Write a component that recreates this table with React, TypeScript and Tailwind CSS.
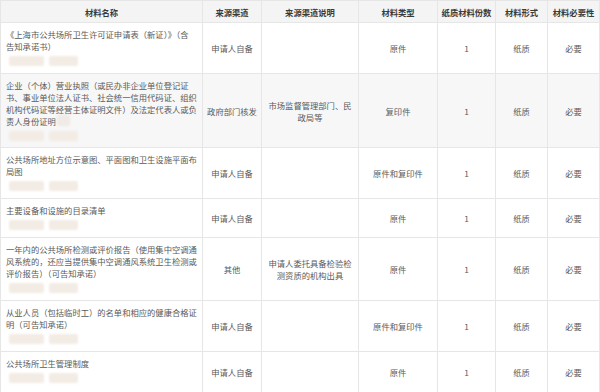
import * as React from "react";

type Row = {
  name: string[];
  tail?: boolean;
  source: string;
  note: string[];
  kind: string;
  shade?: boolean;
  h: string;
};

const ROWS: Row[] = [
  {
    name: ["《上海市公共场所卫生许可证申请表（新证）》（含", "告知承诺书）"],
    source: "申请人自备",
    note: [],
    kind: "原件",
    h: "h-[51px]",
  },
  {
    name: [
      "企业（个体）营业执照（或民办非企业单位登记证",
      "书、事业单位法人证书、社会统一信用代码证、组织",
      "机构代码证等经营主体证明文件）及法定代表人或负",
      "责人身份证明",
    ],
    tail: true,
    source: "政府部门核发",
    note: ["市场监督管理部门、民", "政局等"],
    kind: "复印件",
    shade: true,
    h: "h-[74px]",
  },
  {
    name: ["公共场所地址方位示意图、平面图和卫生设施平面布", "局图"],
    source: "申请人自备",
    note: [],
    kind: "原件和复印件",
    h: "h-[51px]",
  },
  {
    name: ["主要设备和设施的目录清单"],
    source: "申请人自备",
    note: [],
    kind: "原件",
    h: "h-[39px]",
  },
  {
    name: [
      "一年内的公共场所检测或评价报告（使用集中空调通",
      "风系统的，还应当提供集中空调通风系统卫生检测或",
      "评价报告）（可告知承诺）",
    ],
    source: "其他",
    note: ["申请人委托具备检验检", "测资质的机构出具"],
    kind: "原件",
    h: "h-[63px]",
  },
  {
    name: ["从业人员（包括临时工）的名单和相应的健康合格证", "明（可告知承诺）"],
    source: "申请人自备",
    note: [],
    kind: "原件和复印件",
    h: "h-[51px]",
  },
  {
    name: ["公共场所卫生管理制度"],
    source: "申请人自备",
    note: [],
    kind: "原件",
    h: "h-[41px]",
  },
];

const HEADERS = ["材料名称", "来源渠道", "来源渠道说明", "材料类型", "纸质材料份数", "材料形式", "材料必要性"];

function Smudge() {
  // the blurred link labels under each material name
  return (
    <div className="mt-[4px] flex h-[10px] gap-[5px] pl-[3px]">
      <div className="w-[35px] rounded-[2px] bg-[#f3ece5] blur-[1px]" />
      <div className="w-[29px] rounded-[2px] bg-[#f3ece5] blur-[1px]" />
    </div>
  );
}

export default function App() {
  const cell = "border border-[#e6e6e6] text-center align-middle";
  return (
    <div
      className="h-[392px] w-[600px] overflow-hidden bg-white text-[8.3px] leading-[12px] text-[#5a5a5a]"
      style={{ fontFamily: '"Noto Sans CJK SC", "Noto Sans", sans-serif' }}
    >
      <table className="w-[599px] table-fixed border-collapse">
        <colgroup>
          <col className="w-[202px]" />
          <col className="w-[59px]" />
          <col className="w-[97px]" />
          <col className="w-[79px]" />
          <col className="w-[58px]" />
          <col className="w-[52px]" />
          <col className="w-[52px]" />
        </colgroup>
        <thead>
          <tr className="h-[22px] bg-[#f4f4f4]">
            {HEADERS.map((h) => (
              <th key={h} className={`${cell} font-bold text-[#3a3a3a]`}>
                {h}
              </th>
            ))}
          </tr>
        </thead>
        <tbody>
          {ROWS.map((r, i) => (
            <tr key={i} className={`${r.h} ${r.shade ? "bg-[#f7f7f7]" : "bg-white"}`}>
              <td className="border border-[#e6e6e6] px-[5px] pt-[5px] pb-[4px] text-left align-top">
                {r.name.map((line, j) => (
                  <div key={j} className="flex whitespace-nowrap">
                    {line}
                    {r.tail && j === r.name.length - 1 && (
                      <span className="ml-[1px] inline-block h-[11px] w-[13px] rounded-[2px] bg-[#f0ebe6] blur-[1px]" />
                    )}
                  </div>
                ))}
                <Smudge />
              </td>
              <td className={cell}>{r.source}</td>
              <td className={cell}>
                {r.note.map((n, j) => (
                  <div key={j} className="whitespace-nowrap">
                    {n}
                  </div>
                ))}
              </td>
              <td className={cell}>{r.kind}</td>
              <td className={cell}>1</td>
              <td className={cell}>纸质</td>
              <td className={cell}>必要</td>
            </tr>
          ))}
        </tbody>
      </table>
    </div>
  );
}
